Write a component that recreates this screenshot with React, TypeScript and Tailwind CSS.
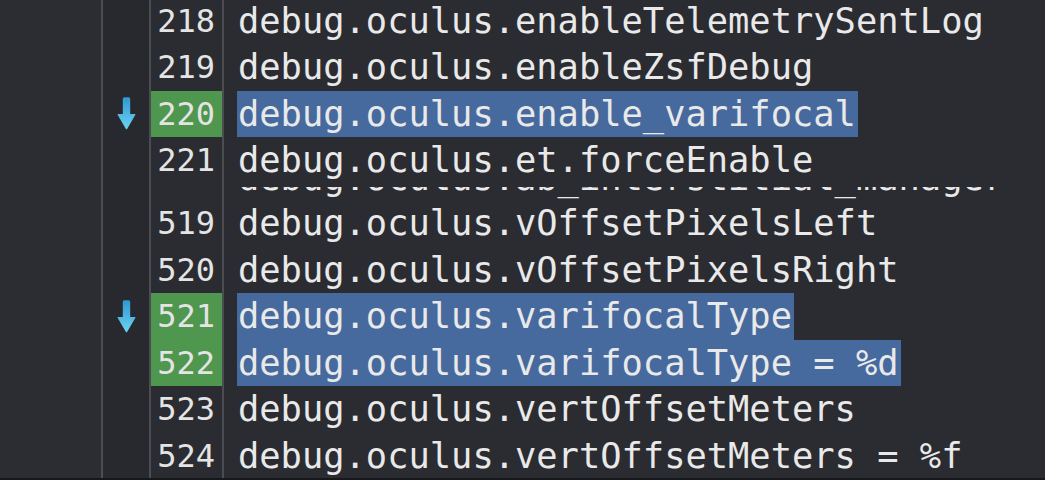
import React from 'react';

type Line = {
  n?: number;
  text: string;
  changed?: boolean;
  arrow?: boolean;
  cut?: boolean;
};

const lines: Line[] = [
  { n: 218, text: 'debug.oculus.enableTelemetrySentLog' },
  { n: 219, text: 'debug.oculus.enableZsfDebug' },
  { n: 220, text: 'debug.oculus.enable_varifocal', changed: true, arrow: true },
  { n: 221, text: 'debug.oculus.et.forceEnable' },
  { text: 'debug.oculus.ab_interstitial_manager', cut: true },
  { n: 519, text: 'debug.oculus.vOffsetPixelsLeft' },
  { n: 520, text: 'debug.oculus.vOffsetPixelsRight' },
  { n: 521, text: 'debug.oculus.varifocalType', changed: true, arrow: true },
  { n: 522, text: 'debug.oculus.varifocalType = %d', changed: true },
  { n: 523, text: 'debug.oculus.vertOffsetMeters' },
  { n: 524, text: 'debug.oculus.vertOffsetMeters = %f' },
];

function DownArrow() {
  return (
    <svg width="19" height="33" viewBox="0 0 18 31">
      <defs>
        <linearGradient id="arrowFill" x1="0" y1="0" x2="0" y2="1">
          <stop offset="0" stopColor="#2e98d2" />
          <stop offset="1" stopColor="#6dd3f3" />
        </linearGradient>
      </defs>
      <path d="M5.5 1.5 Q5.5 0 7 0 H11 Q12.5 0 12.5 1.5 V16 H17 Q18 16 17.3 17 L9.7 30 Q9 31 8.3 30 L0.7 17 Q0 16 1 16 H5.5 Z" fill="url(#arrowFill)" />
    </svg>
  );
}

function CodeRow({ line }: { line: Line }) {
  const textSpan = (
    <span
      className={`inline-block h-[46.5px] leading-[45.5px] pl-[1px] pr-[2px] shrink-0 ${
        line.changed ? 'bg-[#46699e]' : ''
      }`}
    >
      {line.text}
    </span>
  );

  const row = (
    <div className={`flex h-[46.5px] shrink-0 ${line.cut ? '-mt-[28.5px]' : ''}`}>
      <div className="w-[46px] flex items-center justify-center bg-[#27292e]">
        {line.arrow && <DownArrow />}
      </div>
      <div className="w-[2px] bg-[#4b4d52]" />
      <div
        className={`w-[71px] h-[46.5px] pr-[7px] text-right text-[32px] leading-[46px] text-[#e4e4e4] ${
          line.changed ? 'bg-[#4f964e]' : 'bg-[#2a2c31]'
        }`}
      >
        {line.n}
      </div>
      <div className="w-[2px] bg-[#4b4d52]" />
      <div className="flex-1 flex flex-col items-start justify-end pl-[13px] text-[35.4px] text-[#e9e9e9] whitespace-pre">
        {line.cut ? (
          <div className="h-[14.5px] overflow-hidden flex flex-col justify-end">{textSpan}</div>
        ) : (
          textSpan
        )}
      </div>
    </div>
  );

  if (line.cut) {
    return <div className="h-[16.5px] overflow-hidden flex flex-col shrink-0">{row}</div>;
  }
  return row;
}

export default function App() {
  return (
    <div className="w-[1045px] h-[480px] overflow-hidden bg-[#2a2c31] flex flex-col font-['DejaVu_Sans_Mono',monospace]">
      <div className="flex flex-1 overflow-hidden">
        <div className="w-[101px] bg-[#2b2d32]" />
        <div className="w-[2px] bg-[#4b4d52]" />
        <div className="flex-1 flex flex-col -mt-[2.5px]">
          {lines.map((line, i) => (
            <CodeRow key={i} line={line} />
          ))}
        </div>
      </div>
      <div className="h-[2px] bg-[#17181b]" />
    </div>
  );
}
